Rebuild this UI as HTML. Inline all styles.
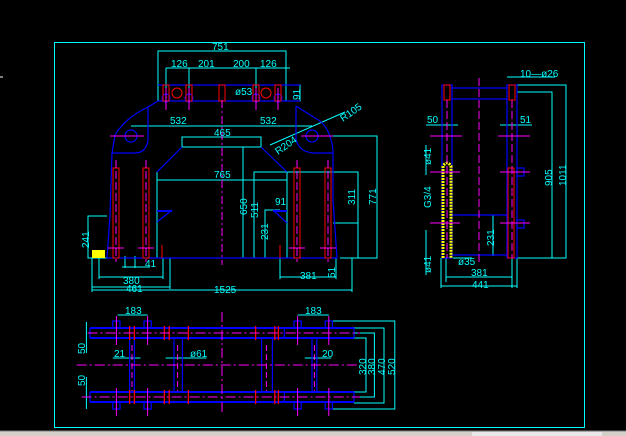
<!DOCTYPE html>
<html><head><meta charset="utf-8"><style>
html,body{margin:0;padding:0;background:#000;width:626px;height:436px;overflow:hidden}
svg{display:block}
text{font-family:"Liberation Sans Narrow","Liberation Sans",sans-serif;font-size:10px;fill:#00ffff}
.ns *{vector-effect:non-scaling-stroke}
</style></head><body>
<svg width="626" height="436" viewBox="0 0 626 436">
<rect width="626" height="436" fill="#000"/>
<line x1="0" y1="77" x2="3" y2="77" stroke="#fff"/>
<rect x="54.5" y="42.5" width="530" height="385" fill="none" stroke="#00ffff"/>
<!-- FRONT VIEW -->
<g stroke="#00ffff" fill="none" stroke-width="1">
<polyline points="158,101 158,51 286,51 286,85"/>
<line x1="166" y1="68" x2="290" y2="68"/><line x1="166" y1="68" x2="166" y2="108"/><line x1="189" y1="68" x2="189" y2="108"/><line x1="256" y1="68" x2="256" y2="108"/>
<rect x="286" y="85" width="14" height="16"/>
<line x1="131" y1="126" x2="312" y2="126"/>
<rect x="182" y="137" width="79" height="10"/>
<line x1="157" y1="180" x2="287" y2="180"/>
<line x1="157" y1="172" x2="157" y2="258"/><line x1="287" y1="172" x2="287" y2="258"/>
<polyline points="243,258 243,147 261,147"/>
<polyline points="254,258 254,172 358,172 358,258"/>
<polyline points="265,258 265,210 280,210"/>
<polyline points="333,136 377,136 377,258 340,258"/>
<line x1="333" y1="223" x2="358" y2="223"/>
<polyline points="107,258 88,258 88,216 107,216"/>
<line x1="92" y1="258" x2="92" y2="292"/><line x1="352" y1="258" x2="352" y2="292"/>
<line x1="92" y1="290" x2="352" y2="290"/>
<line x1="92" y1="287" x2="170" y2="287"/><line x1="170" y1="258" x2="170" y2="289"/>
<line x1="99" y1="277" x2="163" y2="277"/><line x1="99" y1="258" x2="99" y2="279"/><line x1="163" y1="258" x2="163" y2="279"/>
<line x1="280" y1="277" x2="336" y2="277"/><line x1="280" y1="258" x2="280" y2="279"/><line x1="336" y1="258" x2="336" y2="279"/>
<line x1="122" y1="267" x2="150" y2="267"/><line x1="125" y1="256" x2="125" y2="268"/><line x1="135" y1="256" x2="135" y2="268"/>
<line x1="270" y1="145" x2="345" y2="112"/>
</g>
<g stroke="#0000ff" fill="none" stroke-width="1.2">
<line x1="158" y1="85" x2="300" y2="85"/><line x1="158" y1="101" x2="300" y2="101"/>
<path d="M158,101 L148,107 Q125,118 115,135 L112,153 L110,215 L107,258 L337,258 L333,200 L333,150 Q330,125 315,118 L296,106"/>
<path d="M148,107 L148,140 Q146,153 135,153 L112,153"/>
<path d="M296,106 L296,140 Q300,153 315,153 L333,153"/>
<line x1="182" y1="147" x2="157" y2="172"/><line x1="261" y1="147" x2="287" y2="172"/>
<line x1="273" y1="210" x2="287" y2="223"/><line x1="157" y1="222" x2="172" y2="210"/>
<circle cx="131" cy="136" r="6"/><circle cx="312" cy="136" r="6"/>
<circle cx="166" cy="98" r="4"/><circle cx="189" cy="98" r="4"/><circle cx="256" cy="98" r="4"/><circle cx="278" cy="98" r="4"/>
</g>
<g stroke="#0000ff" stroke-width="2"><line x1="157" y1="211" x2="172" y2="211"/><line x1="273" y1="211" x2="287" y2="211"/></g>
<g stroke="#ff0000" fill="none" stroke-width="1">
<rect x="113" y="168" width="6" height="90"/><rect x="143" y="168" width="6" height="90"/><rect x="294" y="168" width="6" height="90"/><rect x="325" y="168" width="6" height="90"/>
<rect x="163" y="85" width="6" height="16"/><rect x="186" y="85" width="6" height="16"/><rect x="219" y="85" width="6" height="16"/><rect x="253" y="85" width="6" height="16"/><rect x="275" y="85" width="6" height="16"/>
<circle cx="177" cy="93" r="5"/><circle cx="266" cy="93" r="5"/>
<line x1="162" y1="245" x2="162" y2="258"/><line x1="280" y1="245" x2="280" y2="258"/>
</g>
<g stroke="#ff00ff" stroke-width="1">
<line x1="222" y1="100" x2="222" y2="265" stroke-dasharray="8,3,2,3"/>
<line x1="116" y1="160" x2="116" y2="262" stroke-dasharray="8,3"/><line x1="146" y1="160" x2="146" y2="262" stroke-dasharray="8,3"/>
<line x1="297" y1="160" x2="297" y2="262" stroke-dasharray="8,3"/><line x1="328" y1="160" x2="328" y2="262" stroke-dasharray="8,3"/>
<line x1="110" y1="136" x2="144" y2="136"/><line x1="301" y1="136" x2="333" y2="136"/>
<line x1="108" y1="248" x2="124" y2="248"/><line x1="138" y1="248" x2="154" y2="248"/><line x1="289" y1="248" x2="305" y2="248"/><line x1="320" y1="248" x2="336" y2="248"/>
<line x1="166" y1="88" x2="166" y2="110"/><line x1="189" y1="88" x2="189" y2="110"/><line x1="256" y1="88" x2="256" y2="110"/><line x1="278" y1="88" x2="278" y2="110"/>
</g>
<rect x="92" y="250" width="13" height="8" fill="#ffff00"/>
<text x="212" y="50">751</text>
<text x="171" y="67">126</text><text x="198" y="67">201</text><text x="233" y="67">200</text><text x="260" y="67">126</text>
<text x="235" y="95">ø53</text>
<text x="170" y="124">532</text><text x="260" y="124">532</text>
<text x="214" y="136">465</text>
<text x="214" y="178">765</text>
<text x="275" y="205">91</text>
<text x="214" y="293">1525</text>
<text x="123" y="284">380</text><text x="126" y="292">461</text>
<text x="300" y="279">381</text>
<text x="145" y="267">41</text>
<text transform="translate(247,215) rotate(-90)">650</text>
<text transform="translate(258,218) rotate(-90)">511</text>
<text transform="translate(268,240) rotate(-90)">231</text>
<text transform="translate(355,205) rotate(-90)">311</text>
<text transform="translate(376,205) rotate(-90)">771</text>
<text transform="translate(89,248) rotate(-90)">241</text>
<text transform="translate(335,278) rotate(-90)">51</text>
<text transform="translate(300,100) rotate(-90)">91</text>
<text transform="translate(343,122) rotate(-35)">R105</text>
<text transform="translate(278,155) rotate(-35)">R204</text>
<!-- SIDE VIEW -->
<g stroke="#00ffff" fill="none">
<line x1="507" y1="77" x2="555" y2="77"/>
<polyline points="517,85 566,85 566,258 517,258"/>
<polyline points="517,92 552,92 552,258"/>
<line x1="446" y1="258" x2="446" y2="282"/><line x1="512" y1="258" x2="512" y2="288"/>
<line x1="441" y1="286" x2="517" y2="286"/><line x1="446" y1="277" x2="512" y2="277"/>
<line x1="441" y1="258" x2="441" y2="288"/><line x1="517" y1="258" x2="517" y2="288"/>
<line x1="426" y1="125" x2="458" y2="125"/><line x1="500" y1="125" x2="532" y2="125"/>
<line x1="453" y1="258" x2="472" y2="258"/><line x1="493" y1="215" x2="493" y2="256"/>
<line x1="426" y1="145" x2="426" y2="175"/><line x1="426" y1="230" x2="426" y2="275"/>
</g>
<g stroke="#0000ff" fill="none" stroke-width="1.2">
<rect x="442" y="85" width="10" height="173"/><rect x="507" y="85" width="10" height="173"/>
<line x1="452" y1="88" x2="507" y2="88"/><line x1="452" y1="99" x2="507" y2="99"/>
<line x1="452" y1="215" x2="507" y2="215"/><line x1="452" y1="255" x2="507" y2="255"/>
<rect x="517" y="168" width="7" height="8"/><rect x="517" y="220" width="7" height="8"/>
</g>
<g stroke="#ff0000" fill="none"><rect x="444" y="85" width="6" height="15"/><rect x="509" y="85" width="6" height="15"/><rect x="508" y="168" width="6" height="90"/></g>
<path d="M443,258 L443,166 Q447,160 451,166 L451,258" stroke="#ffff00" stroke-width="3" fill="none" stroke-dasharray="2,1"/>
<g stroke="#ff00ff"><line x1="479" y1="78" x2="479" y2="262" stroke-dasharray="8,3"/><line x1="447" y1="100" x2="447" y2="258" stroke-dasharray="8,3"/><line x1="512" y1="100" x2="512" y2="258" stroke-dasharray="8,3"/>
<line x1="430" y1="172" x2="460" y2="172"/><line x1="500" y1="172" x2="530" y2="172"/><line x1="430" y1="223" x2="460" y2="223"/><line x1="500" y1="223" x2="530" y2="223"/><line x1="430" y1="136" x2="462" y2="136"/><line x1="498" y1="136" x2="530" y2="136"/></g>
<text x="520" y="77">10—ø26</text>
<text x="427" y="123">50</text><text x="520" y="123">51</text>
<text x="458" y="265">ø35</text>
<text x="471" y="276">381</text><text x="472" y="288">441</text>
<text transform="translate(431,165) rotate(-90)">ø41</text>
<text transform="translate(431,208) rotate(-90)">G3/4</text>
<text transform="translate(431,273) rotate(-90)">ø41</text>
<text transform="translate(494,246) rotate(-90)">231</text>
<text transform="translate(552,186) rotate(-90)">905</text>
<text transform="translate(566,186) rotate(-90)">1011</text>
<!-- BOTTOM VIEW -->
<g transform="matrix(1.2,0,0,1,0,0)" class="ns">
<g stroke="#00ffff" fill="none">
<line x1="98" y1="315" x2="123" y2="315"/><line x1="248" y1="315" x2="274" y2="315"/>
<polyline points="276,321 329,321 329,409 276,409"/>
<polyline points="295,328 320,328 320,403 295,403"/>
<polyline points="295,333 312,333 312,397 295,397"/>
<polyline points="295,338 305,338 305,392 295,392"/>
<line x1="94" y1="358" x2="117" y2="358"/><line x1="138" y1="358" x2="172" y2="358"/><line x1="254" y1="358" x2="276" y2="358"/>
<line x1="72" y1="322" x2="72" y2="353"/><line x1="72" y1="377" x2="72" y2="409"/>
</g>
<g stroke="#0000ff" fill="none" stroke-width="1.2">
<line x1="75" y1="328" x2="295" y2="328" stroke-width="2"/><line x1="75" y1="338" x2="295" y2="338" stroke-width="2"/>
<line x1="75" y1="392" x2="295" y2="392" stroke-width="2"/><line x1="75" y1="402" x2="295" y2="402" stroke-width="2"/>
<line x1="75" y1="328" x2="75" y2="338"/><line x1="295" y1="328" x2="295" y2="338"/><line x1="75" y1="392" x2="75" y2="402"/><line x1="295" y1="392" x2="295" y2="402"/>
<rect x="137" y="328" width="100" height="10"/><rect x="137" y="392" width="100" height="10"/>
<line x1="108" y1="338" x2="108" y2="392"/><line x1="112" y1="338" x2="112" y2="392"/>
<line x1="145" y1="338" x2="145" y2="392"/><line x1="152" y1="338" x2="152" y2="392"/>
<line x1="218" y1="338" x2="218" y2="392"/><line x1="227" y1="338" x2="227" y2="392"/>
<line x1="260" y1="338" x2="260" y2="392"/><line x1="264" y1="338" x2="264" y2="392"/>
<rect x="94" y="321" width="6" height="7"/><rect x="120" y="321" width="6" height="7"/><rect x="245" y="321" width="6" height="7"/><rect x="271" y="321" width="6" height="7"/>
<rect x="94" y="402" width="6" height="7"/><rect x="120" y="402" width="6" height="7"/><rect x="245" y="402" width="6" height="7"/><rect x="271" y="402" width="6" height="7"/>
</g>
<g stroke="#ff0000" stroke-width="1.3">
<line x1="108" y1="326" x2="108" y2="340"/><line x1="112" y1="326" x2="112" y2="340"/><line x1="137" y1="326" x2="137" y2="340"/><line x1="141" y1="326" x2="141" y2="340"/><line x1="157" y1="326" x2="157" y2="340"/><line x1="213" y1="326" x2="213" y2="340"/><line x1="232" y1="326" x2="232" y2="340"/><line x1="229" y1="326" x2="229" y2="340"/>
<line x1="108" y1="390" x2="108" y2="404"/><line x1="112" y1="390" x2="112" y2="404"/><line x1="137" y1="390" x2="137" y2="404"/><line x1="141" y1="390" x2="141" y2="404"/><line x1="157" y1="390" x2="157" y2="404"/><line x1="213" y1="390" x2="213" y2="404"/><line x1="232" y1="390" x2="232" y2="404"/><line x1="229" y1="390" x2="229" y2="404"/>
</g>
<g stroke="#ff00ff" stroke-width="1">
<line x1="64" y1="365" x2="298" y2="365" stroke-dasharray="10,3,2,3"/>
<line x1="73" y1="333" x2="300" y2="333" stroke-dasharray="10,3,2,3"/><line x1="68" y1="397" x2="300" y2="397" stroke-dasharray="10,3,2,3"/>
<line x1="185" y1="312" x2="185" y2="412" stroke-dasharray="10,3,2,3"/>
<line x1="97" y1="316" x2="97" y2="345"/><line x1="123" y1="316" x2="123" y2="345"/><line x1="248" y1="316" x2="248" y2="345"/><line x1="274" y1="316" x2="274" y2="345"/>
<line x1="97" y1="388" x2="97" y2="416"/><line x1="123" y1="388" x2="123" y2="416"/><line x1="248" y1="388" x2="248" y2="416"/><line x1="274" y1="388" x2="274" y2="416"/>
<line x1="110" y1="345" x2="110" y2="391" stroke-dasharray="6,3"/><line x1="148" y1="345" x2="148" y2="391" stroke-dasharray="6,3"/><line x1="222" y1="345" x2="222" y2="391" stroke-dasharray="6,3"/><line x1="262" y1="345" x2="262" y2="391" stroke-dasharray="6,3"/>
</g>
</g>
<text x="125" y="314">183</text><text x="305" y="314">183</text>
<text x="114" y="357">21</text><text x="190" y="357">ø61</text><text x="322" y="357">20</text>
<text transform="translate(85,354) rotate(-90)">50</text>
<text transform="translate(85,386) rotate(-90)">50</text>
<text transform="translate(366,375) rotate(-90)">320</text>
<text transform="translate(375,375) rotate(-90)">380</text>
<text transform="translate(385,375) rotate(-90)">470</text>
<text transform="translate(395,375) rotate(-90)">520</text>
<!-- status bar -->
<rect x="0" y="431" width="626" height="5" fill="#d4d0c8"/>
<rect x="472" y="432" width="130" height="4" fill="#e8e8e8"/>
<line x1="0" y1="431" x2="626" y2="431" stroke="#808080"/>
</svg>
</body></html>
